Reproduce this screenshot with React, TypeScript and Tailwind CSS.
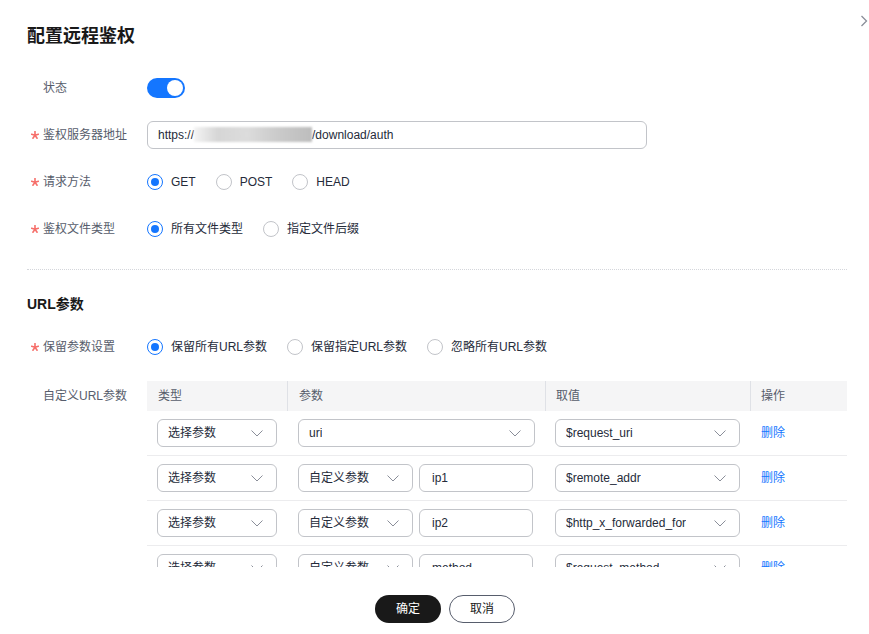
import React from 'react';

const font = "font-['Liberation_Sans','Noto_Sans_CJK_SC',sans-serif]";

const Chevron: React.FC = () => (
  <svg width="12" height="7" viewBox="0 0 12 7" fill="none" className="shrink-0">
    <polyline points="0.5,0.5 6,6 11.5,0.5" stroke="#8a8e99" strokeWidth="1" />
  </svg>
);

// red required mark (5 arms)
const Star: React.FC = () => (
  <svg width="8" height="8" viewBox="0 0 8 8" fill="none">
    <g stroke="#f66f6a" strokeWidth="1.6" strokeLinecap="round">
      <line x1="4" y1="4.3" x2="4" y2="0.6" />
      <line x1="4" y1="4.3" x2="7.4" y2="3.2" />
      <line x1="4" y1="4.3" x2="6.1" y2="7.2" />
      <line x1="4" y1="4.3" x2="1.9" y2="7.2" />
      <line x1="4" y1="4.3" x2="0.6" y2="3.2" />
    </g>
  </svg>
);

const Radio: React.FC<{ checked?: boolean; label: string; className?: string }> = ({ checked, label, className }) => (
  <div className={`flex items-center ${className ?? ''}`}>
    {checked ? (
      <span className="w-[16px] h-[16px] rounded-full border border-[#1476ff] flex items-center justify-center">
        <span className="w-[8px] h-[8px] rounded-full bg-[#1476ff]" />
      </span>
    ) : (
      <span className="w-[16px] h-[16px] rounded-full border border-[#c2c4c9] bg-white" />
    )}
    <span className="ml-[8px] text-[12px] text-[#252b3a]">{label}</span>
  </div>
);

const FormRow: React.FC<{ label: string; required?: boolean; children: React.ReactNode }> = ({ label, required, children }) => (
  <div className="flex items-center h-[47px]">
    <div className="w-[120px] flex items-center pl-[4px] text-[12px] text-[#575d6c]">
      <span className="w-[12px] flex items-center">{required ? <Star /> : null}</span>
      <span>{label}</span>
    </div>
    <div className="flex-1 flex items-center">{children}</div>
  </div>
);

const Select: React.FC<{ value: string; className: string }> = ({ value, className }) => (
  <div className={`h-[28px] rounded-[6px] border border-[#c2c4c9] bg-white flex items-center justify-between pl-[10px] pr-[13px] text-[12px] text-[#252b3a] ${className}`}>
    <span className="truncate">{value}</span>
    <Chevron />
  </div>
);

const TextBox: React.FC<{ value: string; className: string }> = ({ value, className }) => (
  <div className={`h-[28px] rounded-[6px] border border-[#c2c4c9] bg-white flex items-center px-[12px] text-[12px] text-[#252b3a] ${className}`}>
    {value}
  </div>
);

type Row = { custom?: string; value: string };

const rows: Row[] = [
  { value: '$request_uri' },
  { custom: 'ip1', value: '$remote_addr' },
  { custom: 'ip2', value: '$http_x_forwarded_for' },
  { custom: 'method', value: '$request_method' },
];

const App: React.FC = () => {
  return (
    <div className={`w-[869px] h-[634px] bg-white flex flex-col relative overflow-hidden ${font}`}>
      {/* close arrow */}
      <div className="absolute top-[15px] right-[1px]">
        <svg width="8" height="12" viewBox="0 0 8 12" fill="none">
          <polyline points="1.5,1 6.5,6 1.5,11" stroke="#8a8e99" strokeWidth="1.3" />
        </svg>
      </div>

      <div className="h-[567px] overflow-hidden pl-[27px] pr-[22px]">
        <h1 className="pt-[24px] text-[18px] leading-[24px] font-bold text-[#191919]">配置远程鉴权</h1>

        <div className="mt-[16px]">
          <FormRow label="状态">
            <div className="w-[38px] h-[20px] rounded-full bg-[#1476ff] flex items-center justify-end pr-[2px]">
              <span className="w-[16px] h-[16px] rounded-full bg-white" />
            </div>
          </FormRow>
          <FormRow label="鉴权服务器地址" required>
            <div className="w-[500px] h-[28px] rounded-[6px] border border-[#c2c4c9] flex items-center pl-[10px] text-[12px] text-[#252b3a]">
              <span>https://</span>
              <span className="inline-block w-[118px] h-[15px] blur-[1px] bg-[linear-gradient(90deg,#f4f4f4_0%,#d6d6d6_20%,#dcdcdc_45%,#cbcbcb_70%,#bdbdbd_100%)]" />
              <span>/download/auth</span>
            </div>
          </FormRow>
          <FormRow label="请求方法" required>
            <Radio checked label="GET" />
            <Radio label="POST" className="ml-[20px]" />
            <Radio label="HEAD" className="ml-[20px]" />
          </FormRow>
          <FormRow label="鉴权文件类型" required>
            <Radio checked label="所有文件类型" />
            <Radio label="指定文件后缀" className="ml-[20px]" />
          </FormRow>
        </div>

        <div className="mt-[17px] border-t border-dotted border-[#d4d6db]" />

        <h2 className="mt-[24px] text-[14px] leading-[20px] font-bold text-[#191919]">URL参数</h2>

        <div className="mt-[9px]">
          <FormRow label="保留参数设置" required>
            <Radio checked label="保留所有URL参数" />
            <Radio label="保留指定URL参数" className="ml-[20px]" />
            <Radio label="忽略所有URL参数" className="ml-[20px]" />
          </FormRow>
        </div>

        <div className="mt-[11px] flex">
          <div className="w-[120px] h-[30px] flex items-center pl-[16px] text-[12px] text-[#575d6c]">自定义URL参数</div>
          <div className="w-[700px]">
            <div className="h-[30px] bg-[#f5f5f6] flex text-[12px] text-[#575d6c]">
              <div className="w-[140px] flex items-center pl-[11px]">类型</div>
              <div className="w-[258px] flex items-center pl-[11px] border-l border-[#dfe1e6]">参数</div>
              <div className="w-[205px] flex items-center pl-[10px] border-l border-[#dfe1e6]">取值</div>
              <div className="flex-1 flex items-center pl-[10px] border-l border-[#dfe1e6]">操作</div>
            </div>
            {rows.map((r, i) => (
              <div key={i} className="h-[45px] flex items-center border-b border-[#ececee]">
                <div className="w-[140px] pl-[10px]">
                  <Select value="选择参数" className="w-[120px]" />
                </div>
                <div className="w-[258px] pl-[11px] flex gap-[6px]">
                  {r.custom ? (
                    <>
                      <Select value="自定义参数" className="w-[115px]" />
                      <TextBox value={r.custom} className="w-[114px]" />
                    </>
                  ) : (
                    <Select value="uri" className="w-[237px]" />
                  )}
                </div>
                <div className="w-[205px] pl-[10px]">
                  <Select value={r.value} className="w-[185px]" />
                </div>
                <div className="flex-1 pl-[11px] text-[12px] text-[#1476ff]">删除</div>
              </div>
            ))}
          </div>
        </div>
      </div>

      <div className="flex-1 flex justify-center pl-[21px] pt-[28px] gap-[8px]">
        <button className="w-[66px] h-[28px] rounded-full bg-[#191919] text-white text-[12px]">确定</button>
        <button className="w-[66px] h-[28px] rounded-full border border-[#575d6c] bg-white text-[#191919] text-[12px]">取消</button>
      </div>
    </div>
  );
};

export default App;
